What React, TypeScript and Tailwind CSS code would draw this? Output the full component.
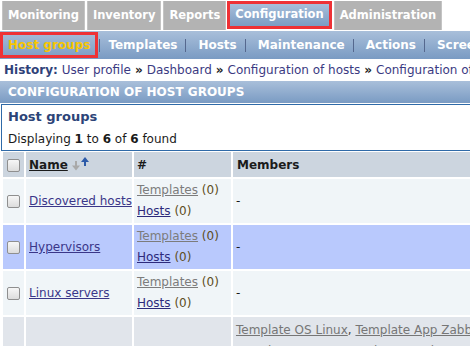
import React from 'react';

const tabs = ['Monitoring', 'Inventory', 'Reports', 'Configuration', 'Administration'];
const subItems = ['Templates', 'Hosts', 'Maintenance', 'Actions', 'Screens', 'Slides', 'Maps', 'Discovery'];
const history = ['User profile', 'Dashboard', 'Configuration of hosts', 'Configuration of host groups'];

const zabbixTemplates = [
  'Template OS Linux',
  'Template App Zabbix Server',
  'Template App Zabbix Agent',
  'Template App FTP Service',
  'Template App HTTP Service',
  'Template App IMAP Service',
  'Template App LDAP Service',
  'Template App MySQL',
  'Template App NNTP Service',
  'Template App NTP Service',
  'Template App POP Service',
  'Template App SMTP Service',
  'Template App SSH Service',
  'Template App Telnet Service',
  'Template ICMP Ping',
  'Template SNMP Device',
  'Template SNMP Generic',
  'Template SNMP Interfaces',
  'Template SNMP OS Linux',
  'Template Virt VMware',
];

interface Group {
  name: string;
  highlight?: boolean;
  members: string[] | null;
}

const groups: Group[] = [
  { name: 'Discovered hosts', members: null },
  { name: 'Hypervisors', highlight: true, members: null },
  { name: 'Linux servers', members: null },
  { name: 'Templates', members: zabbixTemplates },
];

function CheckBox() {
  return (
    <span className="inline-block w-[13px] h-[13px] rounded-[2px] border border-[#8f8f8f] bg-linear-to-b from-[#f7f7f7] to-[#dcdcdc] align-middle" />
  );
}

function SortArrows() {
  return (
    <svg width="18" height="16" viewBox="0 0 18 16" className="inline-block ml-[4px] align-[-3px]">
      {/* down arrow, inactive */}
      <rect x="3" y="5" width="2" height="5" fill="#a9a9a9" />
      <path d="M0 9.5 L8 9.5 L4 14.5 Z" fill="#a9a9a9" />
      {/* up arrow, active */}
      <path d="M9 6 L17 6 L13 1 Z" fill="#2d5ba9" />
      <rect x="12" y="5.5" width="2" height="4.5" fill="#2d5ba9" />
    </svg>
  );
}

export default function App() {
  return (
    <div className="w-[470px] h-[346px] overflow-hidden bg-white font-['DejaVu_Sans',Verdana,sans-serif] text-[12px] text-[#1b1b1b]">
      <div className="w-[720px]">
        {/* Main tabs */}
        <div className="flex h-[30px] pt-[1px] pl-[2px] gap-[2px] text-[11.5px]">
          {tabs.map((t) =>
            t === 'Configuration' ? (
              <div
                key={t}
                className="h-[28px] -ml-[1px] px-[5px] flex items-center border-[3px] border-[#ee3135] bg-linear-to-b from-[#a8bed9] to-[#7b9cc3] text-white font-bold"
              >
                {t}
              </div>
            ) : (
              <div
                key={t}
                className="h-[29px] px-[5px] flex items-center bg-[#b3b3b3] border-x border-[#c4c4c4] text-white font-bold"
              >
                {t}
              </div>
            )
          )}
        </div>

        {/* Sub menu */}
        <div className="flex items-center h-[28px] mt-[1px] bg-linear-to-b from-[#a9bfda] to-[#7a9bc3]">
          <div className="h-[26px] self-start mt-[1px] px-[5px] flex items-center border-[3px] border-[#ee3135] text-[#f7c600] font-bold">
            Host groups
          </div>
          {subItems.map((s, i) => (
            <React.Fragment key={s}>
              <span className={`w-px h-[13px] bg-[#55688e] ${i === 0 ? 'ml-[1px] mr-[8px]' : 'ml-[8px] mr-[12px]'}`} />
              <span className="text-white font-bold">{s}</span>
            </React.Fragment>
          ))}
        </div>

        {/* History */}
        <div className="flex items-center h-[21px] pl-[4px] whitespace-nowrap">
          <span className="font-bold text-[#2f4279] mr-[4px]">History:</span>
          {history.map((h, i) => (
            <React.Fragment key={h}>
              {i > 0 && <span className="font-bold text-[#222] mx-[4px]">»</span>}
              <span className="text-[#3b3a82]">{h}</span>
            </React.Fragment>
          ))}
        </div>

        {/* Header bar */}
        <div className="flex items-center h-[22px] mt-[1px] pl-[8px] bg-linear-to-b from-[#a9bfda] to-[#7a9bc3] text-white font-bold uppercase">
          Configuration of host groups
        </div>

        {/* Info box */}
        <div className="h-[47px] mt-[1px] ml-[1px] pl-[6px] pt-[1px] border border-[#2f6aa8] bg-white">
          <div className="leading-[22px] text-[13px] font-bold text-[#2c4478]">Host groups</div>
          <div className="leading-[22px]">
            Displaying <b>1</b> to <b>6</b> of <b>6</b> found
          </div>
        </div>

        {/* Table */}
        <table className="table-fixed w-[710px] ml-[1px] border-separate border-spacing-[2px] -mt-[1px]">
          <colgroup>
            <col className="w-[21px]" />
            <col className="w-[106px]" />
            <col className="w-[97px]" />
            <col />
          </colgroup>
          <thead>
            <tr className="h-[25px] bg-[#ccd5df]">
              <th className="text-center align-middle">
                <CheckBox />
              </th>
              <th className="pl-[3px] text-left font-bold">
                <span className="underline">Name</span>
                <SortArrows />
              </th>
              <th className="pl-[3px] text-left font-bold">#</th>
              <th className="pl-[4px] text-left font-bold">Members</th>
            </tr>
          </thead>
          <tbody>
            {groups.map((g) => {
              const bg = g.highlight ? 'bg-[#b9c9fd]' : g.members ? 'bg-[#e1e5eb]' : 'bg-[#f0f5f8]';
              return (
                <tr key={g.name} className={bg}>
                  <td className="text-center align-middle">
                    <CheckBox />
                  </td>
                  <td className="pl-[3px] align-middle whitespace-nowrap">
                    <span className="underline text-[#3a3689]">{g.name}</span>
                  </td>
                  <td className="pl-[3px] py-[1px] align-middle leading-[21px] whitespace-nowrap">
                    <div>
                      <span className="underline text-[#7c7c7c]">Templates</span>{' '}
                      <span className="text-[#5d4d22]">(0)</span>
                    </div>
                    <div>
                      <span className="underline text-[#2d2a7c]">Hosts</span>{' '}
                      <span className="text-[#5d4d22]">(0)</span>
                    </div>
                  </td>
                  <td className={`pl-[3px] ${g.members ? 'align-top pt-[3px] leading-[21px]' : 'align-middle h-[44px]'}`}>
                    {g.members ? (
                      g.members.map((m, i) => (
                        <React.Fragment key={m}>
                          <span className="underline text-[#767676]">{m}</span>
                          {i < g.members!.length - 1 && <span className="text-[#444]">, </span>}
                        </React.Fragment>
                      ))
                    ) : (
                      <span>-</span>
                    )}
                  </td>
                </tr>
              );
            })}
          </tbody>
        </table>
      </div>
    </div>
  );
}
